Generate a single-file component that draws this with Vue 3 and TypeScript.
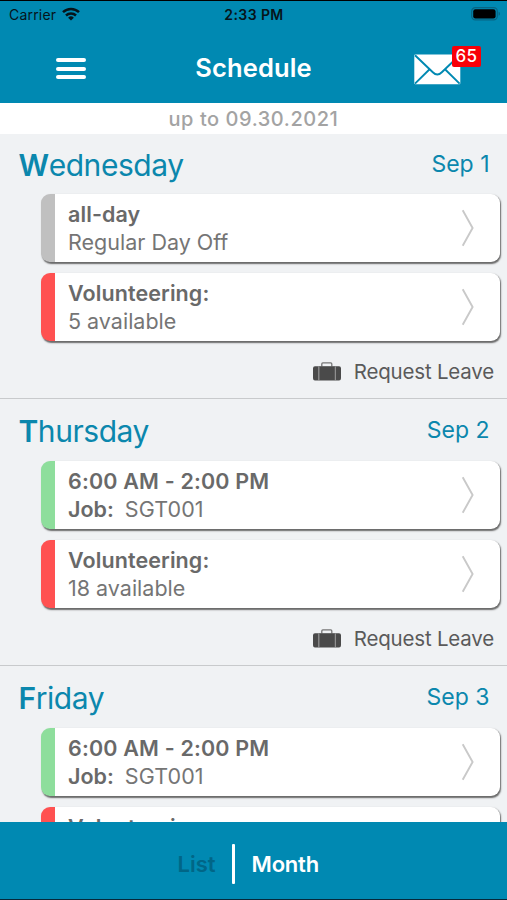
<script setup lang="ts">
interface Entry {
  tone: 'off' | 'open' | 'work'
  title: string
  label?: string
  detail: string
}
interface Day {
  name: string
  date: string
  entries: Entry[]
}

const days: Day[] = [
  {
    name: 'Wednesday',
    date: 'Sep 1',
    entries: [
      { tone: 'off', title: 'all-day', detail: 'Regular Day Off' },
      { tone: 'open', title: 'Volunteering:', detail: '5 available' },
    ],
  },
  {
    name: 'Thursday',
    date: 'Sep 2',
    entries: [
      { tone: 'work', title: '6:00 AM - 2:00 PM', label: 'Job:', detail: 'SGT001' },
      { tone: 'open', title: 'Volunteering:', detail: '18 available' },
    ],
  },
  {
    name: 'Friday',
    date: 'Sep 3',
    entries: [
      { tone: 'work', title: '6:00 AM - 2:00 PM', label: 'Job:', detail: 'SGT001' },
      { tone: 'open', title: 'Volunteering:', detail: '' },
    ],
  },
]
</script>

<template>
  <div class="screen">
    <div class="status">
      <div class="carrier">
        <span>Carrier</span>
        <svg width="18" height="14" viewBox="0 0 18 14" fill="none" stroke="#06141a" stroke-width="2.5">
          <path d="M1 5.2a11.6 11.6 0 0 1 16 0" />
          <path d="M4 8.5a7.3 7.3 0 0 1 10 0" />
          <path d="M9 13.5 6.1 10.7a4.2 4.2 0 0 1 5.8 0z" fill="#06141a" stroke="none" />
        </svg>
      </div>
      <span class="clock">2:33 PM</span>
      <svg class="battery" width="30" height="14" viewBox="0 0 30 14">
        <rect x="0.7" y="0.7" width="25.6" height="12.2" rx="3.6" fill="none" stroke="#076583" stroke-width="1.2" />
        <rect x="2.2" y="2.2" width="22.4" height="9.2" rx="2.2" fill="#000" />
        <path d="M27.6 4.8c1.9.7 1.9 3.3 0 4z" fill="#076583" />
      </svg>
    </div>

    <header class="header">
      <button class="menu" aria-label="Menu"><i /><i /><i /></button>
      <h1>Schedule</h1>
      <div class="mail">
        <svg width="47" height="31" viewBox="0 0 47 31">
          <rect x="0.3" y="0.6" width="46" height="29.6" rx="1" fill="#fff" />
          <path d="M1 1.2 18.8 18.3q4.5 4.4 9 0L45.6 1.2M1 29.6 15.6 15.3M45.6 29.6 31 15.3" fill="none" stroke="#0089b2" stroke-width="1.9" />
        </svg>
        <span class="badge">65</span>
      </div>
    </header>

    <div class="range"><span>up to 09.30.2021</span></div>

    <main class="list">
      <section v-for="day in days" :key="day.name" class="day">
        <div class="day-head">
          <h2>{{ day.name }}</h2>
          <span class="date">{{ day.date }}</span>
        </div>
        <div class="cards">
          <article v-for="(entry, i) in day.entries" :key="i" class="card" :class="entry.tone">
            <div class="copy">
              <div class="title" :class="{ time: entry.tone === 'work' }">{{ entry.title }}</div>
              <div class="detail">
                <b v-if="entry.label">{{ entry.label }}</b><span :class="{ job: entry.label }">{{ entry.detail }}</span>
              </div>
            </div>
            <svg class="chevron" width="14" height="38" viewBox="0 0 14 38" fill="none" stroke="#c9c9c9" stroke-width="1.9">
              <path d="M1.7 1.2 11.6 19 1.7 36.8" />
            </svg>
          </article>
        </div>
        <div v-if="day.name !== 'Friday'" class="leave">
          <svg width="28" height="19" viewBox="0 0 28 19">
            <path d="M8.8 4.5V1.9q0-1 1-1h8q1 0 1 1v2.6" fill="none" stroke="#777" stroke-width="1.3" />
            <rect x="5.5" y="4.2" width="17.2" height="14.3" fill="#4a4a4a" />
            <path d="M5.6 4.2H2Q0 4.2 0 6.3v10q0 2.2 2 2.2h3.6zM22.6 4.2H26q2 0 2 2.1v10q0 2.2-2 2.2h-3.4z" fill="#4a4a4a" />
            <path d="M5.9 4.6v13.6M22.3 4.6v13.6" stroke="#999" stroke-width="1" />
          </svg>
          <span>Request Leave</span>
        </div>
      </section>
    </main>

    <nav class="tabs">
      <span class="tab active">List</span>
      <i class="divider" />
      <span class="tab month">Month</span>
    </nav>
  </div>
</template>

<style>
body {
  margin: 0;
  background: #f0f2f4;
}
</style>

<style scoped>
.screen {
  display: flex;
  flex-direction: column;
  box-sizing: border-box;
  width: 507px;
  height: 900px;
  overflow: hidden;
  border-top: 1px solid #000;
  border-bottom: 1px solid #06283a;
  background: #f0f2f4;
  font-family: Inter, "Liberation Sans", sans-serif;
}
.status {
  display: grid;
  grid-template-columns: 1fr auto 1fr;
  align-items: center;
  flex: none;
  height: 26px;
  padding: 0 6px 0 9px;
  background: #0089b2;
  color: #06141a;
  font-size: 14px;
}
.carrier {
  display: flex;
  align-items: center;
  gap: 6px;
  letter-spacing: 0.2px;
}
.clock {
  font-weight: 600;
  font-size: 14px;
  letter-spacing: 0.4px;
  margin-right: 2px;
}
.battery {
  justify-self: end;
}
.header {
  display: grid;
  grid-template-columns: 1fr auto 1fr;
  align-items: center;
  flex: none;
  height: 76px;
  padding: 7px 46px 0 46px;
  background: #0089b2;
  color: #fff;
  box-sizing: border-box;
}
.menu {
  display: flex;
  flex-direction: column;
  gap: 4.5px;
  width: 30px;
  margin-left: 10px;
  padding: 0;
  border: 0;
  background: none;
}
.menu i {
  height: 4px;
  border-radius: 2px;
  background: #fff;
}
h1 {
  margin: 0 0 2px;
  font-size: 25.5px;
  font-weight: 600;
  line-height: 30px;
  letter-spacing: 0.15px;
}
.mail {
  position: relative;
  justify-self: end;
  width: 47px;
  height: 31px;
  margin-top: 1px;
}
.badge {
  position: absolute;
  left: 38px;
  top: -8px;
  width: 29px;
  height: 21px;
  border-radius: 2px;
  background: #f80008;
  font-size: 17px;
  font-weight: 500;
  line-height: 21px;
  letter-spacing: 0.4px;
  text-align: center;
}
.range {
  flex: none;
  height: 31px;
  background: #fff;
  color: #a3a3a3;
  font-size: 20px;
  font-weight: 500;
  line-height: 32px;
  letter-spacing: 0.55px;
  text-align: center;
}
.list {
  flex: 1;
  min-height: 0;
  overflow: hidden;
}
.day {
  box-sizing: border-box;
  height: 267px;
  padding: 0 7px 0 40.5px;
  border-bottom: 1px solid #c8cacc;
}
.day:first-child {
  height: 265px;
}
.day-head {
  display: flex;
  align-items: center;
  justify-content: space-between;
  height: 60.4px;
  margin-left: -22px;
  padding-right: 10.5px;
  color: #0b87ad;
}
.day:not(:first-child) .day-head {
  height: 62.4px;
}
h2 {
  margin: 1px 0 0;
  font-size: 30px;
  font-weight: 400;
  letter-spacing: -0.45px;
}
h2::first-letter {
  font-weight: 600;
}
.date {
  font-size: 23px;
}
.cards {
  display: flex;
  flex-direction: column;
  gap: 11px;
}
.card {
  display: flex;
  align-items: center;
  justify-content: space-between;
  box-sizing: border-box;
  height: 68px;
  padding: 0 25px 0 13.5px;
  border-left: 14px solid;
  border-radius: 9px;
  background: #fff;
  box-shadow: 1px 1.5px 1.5px #6a6a6a;
}
.card.off {
  border-left-color: #c0c0c0;
}
.card.open {
  border-left-color: #ff5151;
}
.card.work {
  border-left-color: #8ede9c;
}
.copy {
  color: #757575;
  font-size: 21.5px;
  line-height: 28px;
  white-space: nowrap;
}
.detail {
  min-height: 28px;
}
.title,
.detail b {
  color: #696969;
  font-weight: 600;
}
.title {
  letter-spacing: 0.1px;
}
.title.time {
  letter-spacing: 0.17px;
}
.job {
  margin-left: 11px;
  letter-spacing: 0.1px;
}
.leave {
  display: flex;
  align-items: center;
  justify-content: flex-end;
  gap: 13px;
  height: 60px;
  padding-right: 6px;
  color: #5a5a5a;
  font-size: 20.5px;
  letter-spacing: -0.2px;
}
.tabs {
  display: flex;
  align-items: center;
  flex: none;
  height: 77.5px;
  padding: 8px 0 0 177.5px;
  box-sizing: border-box;
  background: #0089b2;
  color: #fff;
  font-size: 22px;
  font-weight: 600;
}
.month {
  letter-spacing: -0.2px;
}
.active {
  color: #006687;
}
.divider {
  width: 3px;
  height: 40px;
  margin: 0 17px 0 16px;
  border-radius: 1px;
  background: #fff;
}
</style>
